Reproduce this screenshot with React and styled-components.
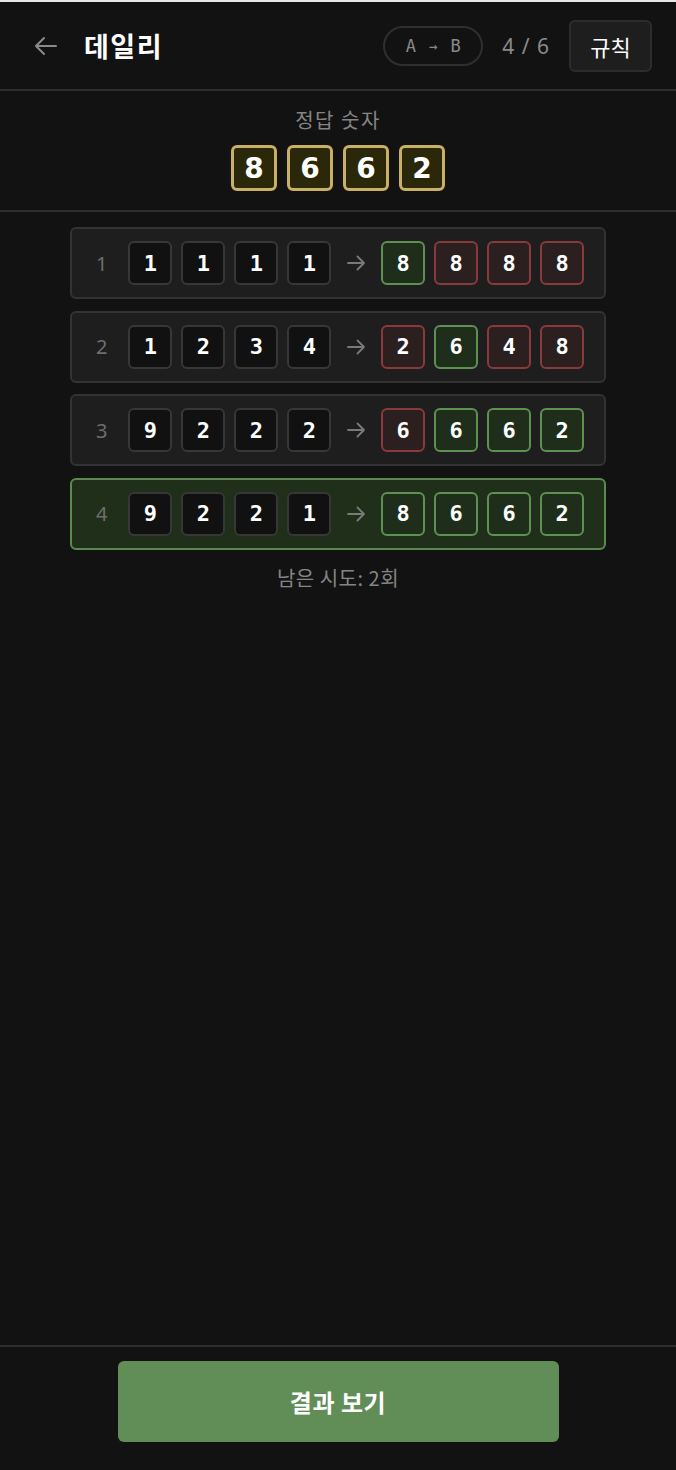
import React from 'react'
import styled, { createGlobalStyle, css } from 'styled-components'

const GlobalStyle = createGlobalStyle`
  html, body {
    margin: 0;
    padding: 0;
    background: #121212;
  }
  * {
    box-sizing: border-box;
  }
`

const Screen = styled.div`
  display: flex;
  flex-direction: column;
  min-height: 100vh;
  background: #121212;
  border-top: 2px solid #e8e6ea;
  font-family: 'Noto Sans', 'Noto Sans CJK KR', sans-serif;
  color: #fff;
`

const Header = styled.header`
  display: flex;
  align-items: center;
  height: 89px;
  padding: 0 24px 0 34px;
  border-bottom: 2px solid #2e2e2e;
`

const BackButton = styled.button`
  display: flex;
  align-items: center;
  padding: 0;
  border: 0;
  background: none;
  color: #8a8a8a;
  cursor: pointer;
`

const Title = styled.h1`
  margin: 0 0 0 26px;
  font-family: 'Noto Sans CJK KR', sans-serif;
  font-size: 27px;
  font-weight: 700;
  letter-spacing: 1.5px;
  flex: 1;
`

const ModePill = styled.div`
  display: flex;
  align-items: center;
  justify-content: center;
  gap: 13px;
  width: 100px;
  height: 40px;
  margin-left: 2px;
  border: 2px solid #2f2f2f;
  border-radius: 20px;
  font-family: 'DejaVu Sans Mono', monospace;
  font-size: 17px;
  color: #8a8a8a;

  span {
    font-size: 14px;
  }
`

const Progress = styled.div`
  margin: 0 19px;
  font-size: 21px;
  color: #8a8a8a;
  letter-spacing: 1px;
`

const RulesButton = styled.button`
  width: 83px;
  height: 52px;
  border: 2px solid #2c2c2c;
  border-radius: 6px;
  background: #1e1e1e;
  color: #fff;
  font-family: 'Noto Sans CJK KR', sans-serif;
  font-size: 22px;
`

const AnswerSection = styled.section`
  display: flex;
  flex-direction: column;
  align-items: center;
  gap: 11px;
  padding: 15px 0 19px;
  border-bottom: 2px solid #2e2e2e;
`

const Label = styled.div`
  font-family: 'Noto Sans CJK KR', sans-serif;
  font-size: 20px;
  line-height: 28px;
  color: #858585;
  letter-spacing: 1.5px;
`

const AnswerTiles = styled.div`
  display: flex;
  gap: 10px;
`

const AnswerTile = styled.div`
  display: flex;
  align-items: center;
  justify-content: center;
  width: 46px;
  height: 46px;
  border: 3px solid #c8b064;
  border-radius: 6px;
  background: #2b2709;
  font-family: 'DejaVu Sans', sans-serif;
  font-weight: 700;
  font-size: 28px;
`

const Board = styled.main`
  display: flex;
  flex-direction: column;
  align-items: center;
  gap: 11.6px;
  padding-top: 15px;
  flex: 1;
`

const Row = styled.div`
  display: flex;
  align-items: center;
  width: 536px;
  height: 72px;
  padding: 0 20px 0 18px;
  border: 2px solid #333;
  border-radius: 6px;
  background: #1e1e1e;

  ${(p) =>
    p.$solved &&
    css`
      border-color: #5b8a50;
      background: #1f2f1a;
    `}
`

const RowNumber = styled.span`
  width: 24px;
  margin-right: 15px;
  text-align: center;
  font-size: 20px;
  color: #6e6e6e;
`

const Tiles = styled.div`
  display: flex;
  gap: 9px;
`

const tileTones = {
  plain: css`
    border-color: #373737;
    background: #111;
  `,
  hit: css`
    border-color: #5f9053;
    background: #1e2e1a;
  `,
  miss: css`
    border-color: #8a3a3a;
    background: #2b1f20;
  `,
}

const Tile = styled.div`
  display: flex;
  align-items: center;
  justify-content: center;
  width: 44px;
  height: 44px;
  border: 2px solid;
  border-radius: 6px;
  font-family: 'DejaVu Sans Mono', monospace;
  font-weight: 700;
  font-size: 22px;
  ${(p) => tileTones[p.$tone]}
`

const Arrow = styled.div`
  display: flex;
  justify-content: center;
  width: 51px;
  color: #7a7a7a;
`

const Remaining = styled.div`
  margin-top: 2px;
  font-family: 'Noto Sans CJK KR', sans-serif;
  font-size: 20px;
  letter-spacing: 0.5px;
  color: #858585;
`

const Footer = styled.footer`
  display: flex;
  justify-content: center;
  padding: 14px 0 28px;
  border-top: 2px solid #2e2e2e;
`

const ResultButton = styled.button`
  width: 441px;
  height: 81px;
  border: 0;
  border-radius: 6px;
  background: #618d56;
  color: #fff;
  font-family: 'Noto Sans CJK KR', sans-serif;
  font-size: 24px;
  font-weight: 700;
  letter-spacing: 0.5px;
  cursor: pointer;
`

const answer = ['8', '6', '6', '2']

const guesses = [
  { input: '1111', result: '8888', tones: ['hit', 'miss', 'miss', 'miss'] },
  { input: '1234', result: '2648', tones: ['miss', 'hit', 'miss', 'miss'] },
  { input: '9222', result: '6662', tones: ['miss', 'hit', 'hit', 'hit'] },
  { input: '9221', result: '8662', tones: ['hit', 'hit', 'hit', 'hit'] },
]

const LeftArrow = () => (
  <svg width="24" height="20" viewBox="0 0 24 20" fill="none" stroke="currentColor" strokeWidth="2" strokeLinecap="round" strokeLinejoin="round">
    <path d="M22 10H3M10 2L2 10l8 8" />
  </svg>
)

const RightArrow = () => (
  <svg width="19" height="16" viewBox="0 0 19 16" fill="none" stroke="currentColor" strokeWidth="1.8" strokeLinecap="round" strokeLinejoin="round">
    <path d="M1 8h16M10.5 1.5L17 8l-6.5 6.5" />
  </svg>
)

const App = () => {
  return (
    <Screen>
      <GlobalStyle />
      <Header>
        <BackButton aria-label="뒤로">
          <LeftArrow />
        </BackButton>
        <Title>데일리</Title>
        <ModePill>
          A<span>→</span>B
        </ModePill>
        <Progress>4 / 6</Progress>
        <RulesButton>규칙</RulesButton>
      </Header>

      <AnswerSection>
        <Label>정답 숫자</Label>
        <AnswerTiles>
          {answer.map((d, i) => (
            <AnswerTile key={i}>{d}</AnswerTile>
          ))}
        </AnswerTiles>
      </AnswerSection>

      <Board>
        {guesses.map((g, i) => (
          <Row key={i} $solved={g.result === answer.join('')}>
            <RowNumber>{i + 1}</RowNumber>
            <Tiles>
              {g.input.split('').map((d, j) => (
                <Tile key={j} $tone="plain">
                  {d}
                </Tile>
              ))}
            </Tiles>
            <Arrow>
              <RightArrow />
            </Arrow>
            <Tiles>
              {g.result.split('').map((d, j) => (
                <Tile key={j} $tone={g.tones[j]}>
                  {d}
                </Tile>
              ))}
            </Tiles>
          </Row>
        ))}
        <Remaining>남은 시도: 2회</Remaining>
      </Board>

      <Footer>
        <ResultButton>결과 보기</ResultButton>
      </Footer>
    </Screen>
  )
}

export default App
